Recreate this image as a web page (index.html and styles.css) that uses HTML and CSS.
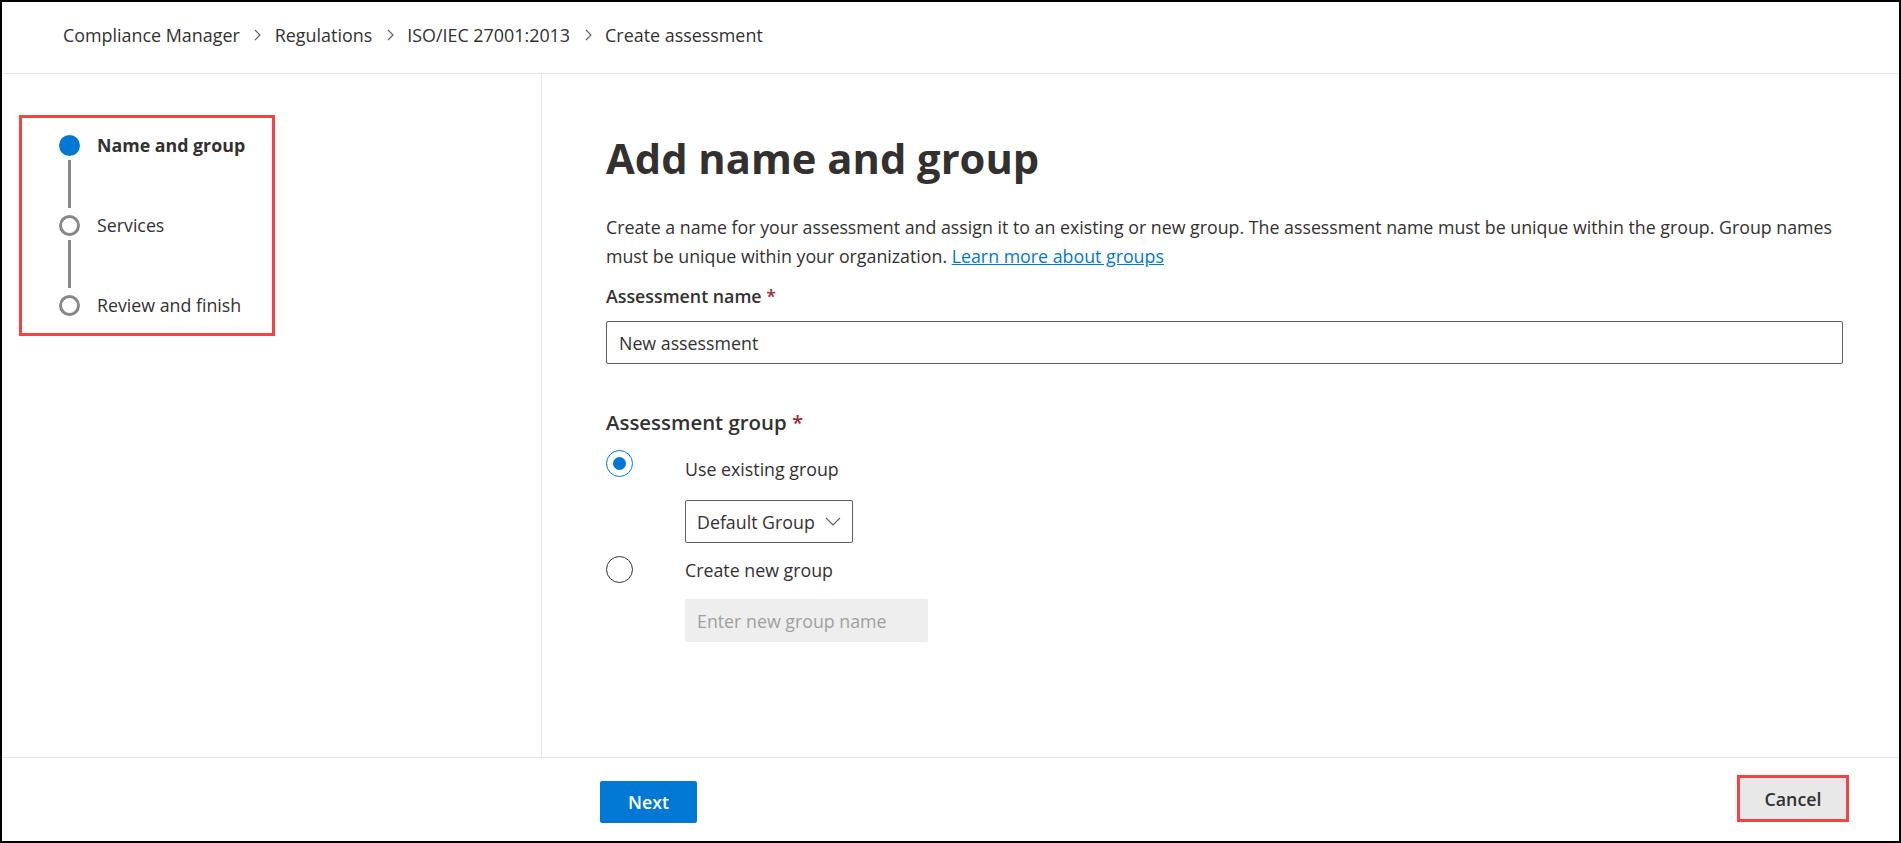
FILE: index.html
```html
<!DOCTYPE html>
<html lang="en">
<head>
<meta charset="utf-8">
<title>Create assessment</title>
<link rel="stylesheet" href="styles.css">
</head>
<body>
<div class="frame">
  <header class="topbar">
    <nav class="crumbs">
      <span class="crumb">Compliance Manager</span>
      <svg class="sep" width="10" height="14" viewBox="0 0 10 14"><path d="M3 2 L8 7 L3 12" fill="none" stroke="#605e5c" stroke-width="1.1"/></svg>
      <span class="crumb">Regulations</span>
      <svg class="sep" width="10" height="14" viewBox="0 0 10 14"><path d="M3 2 L8 7 L3 12" fill="none" stroke="#605e5c" stroke-width="1.1"/></svg>
      <span class="crumb">ISO/IEC 27001:2013</span>
      <svg class="sep" width="10" height="14" viewBox="0 0 10 14"><path d="M3 2 L8 7 L3 12" fill="none" stroke="#605e5c" stroke-width="1.1"/></svg>
      <span class="crumb">Create assessment</span>
    </nav>
  </header>

  <div class="content">
    <aside class="side">
      <div class="stepper">
        <div class="step current"><span class="dot"></span><span class="step-label">Name and group</span></div>
        <div class="connector"></div>
        <div class="step"><span class="dot"></span><span class="step-label">Services</span></div>
        <div class="connector"></div>
        <div class="step"><span class="dot"></span><span class="step-label">Review and finish</span></div>
      </div>
    </aside>

    <main class="main">
      <h1 class="title">Add name and group</h1>
      <p class="desc">Create a name for your assessment and assign it to an existing or new group. The assessment name must be unique within the group. Group names must be unique within your organization. <a href="#" class="link">Learn more about groups</a></p>

      <label class="field-label">Assessment name <span class="req">*</span></label>
      <div class="textbox">New assessment</div>

      <div class="group-label">Assessment group <span class="req">*</span></div>

      <div class="choice first">
        <span class="radio on"></span>
        <span class="choice-text">Use existing group</span>
      </div>
      <div class="dropdown">
        <span>Default Group</span>
        <svg width="16" height="9" viewBox="0 0 16 9"><path d="M1 1 L8 8 L15 1" fill="none" stroke="#605e5c" stroke-width="1.1"/></svg>
      </div>

      <div class="choice second">
        <span class="radio"></span>
        <span class="choice-text">Create new group</span>
      </div>
      <div class="textbox disabled">Enter new group name</div>
    </main>
  </div>

  <footer class="footer">
    <button class="btn primary">Next</button>
    <button class="btn cancel">Cancel</button>
  </footer>
</div>
</body>
</html>
```

FILE: styles.css
```css
html, body {
  margin: 0;
  padding: 0;
}

body {
  font-family: "Open Sans", "Noto Sans", sans-serif;
  color: #323130;
  background: #ffffff;
  font-size: 17.8px;
}

.frame {
  box-sizing: border-box;
  width: 1901px;
  height: 843px;
  border: 2px solid #000000;
  display: flex;
  flex-direction: column;
}

/* Header / breadcrumb */
.topbar {
  box-sizing: border-box;
  height: 72px;
  border-bottom: 1px solid #e5e5e5;
  display: flex;
  align-items: center;
  padding: 0 0 6px 61px;
  flex-shrink: 0;
}

.crumbs {
  display: flex;
  align-items: center;
  gap: 12.5px;
  font-size: 17.9px;
  color: #323130;
}

.sep {
  display: block;
}

/* Body */
.content {
  flex: 1;
  display: flex;
  min-height: 0;
}

.side {
  box-sizing: border-box;
  width: 540px;
  border-right: 1px solid #e5e5e5;
  padding: 41px 0 0 17px;
  flex-shrink: 0;
}

.stepper {
  box-sizing: border-box;
  width: 256px;
  height: 221px;
  border: 3px solid #f24444;
  padding: 17px 0 0 37px;
  display: flex;
  flex-direction: column;
}

.step {
  display: flex;
  align-items: center;
  height: 20px;
}

.dot {
  box-sizing: border-box;
  width: 21px;
  height: 21px;
  border-radius: 50%;
  border: 3px solid #8a8886;
  background: #ffffff;
  flex-shrink: 0;
}

.step.current .dot {
  border: none;
  background: #0078d4;
}

.step-label {
  margin-left: 17px;
  font-size: 17.8px;
  white-space: nowrap;
}

.step.current .step-label {
  font-weight: 700;
}

.connector {
  width: 3px;
  height: 48px;
  margin: 5px 0 7px 9px;
  background: #8a8886;
}

/* Main form */
.main {
  flex: 1;
  box-sizing: border-box;
  padding: 56px 56px 0 64px;
}

.title {
  margin: 0;
  font-size: 41.7px;
  line-height: 56px;
  font-weight: 700;
  color: #323130;
}

.desc {
  margin: 27px 0 0;
  line-height: 29px;
}

.link {
  color: #0078d4;
  text-decoration: underline;
}

.field-label {
  display: block;
  margin-top: 11px;
  line-height: 29px;
  font-weight: 600;
}

.req {
  color: #a4262c;
}

.textbox {
  box-sizing: border-box;
  margin-top: 10px;
  height: 43px;
  border: 1px solid #605e5c;
  border-radius: 2px;
  padding-left: 12px;
  display: flex;
  align-items: center;
}

.group-label {
  margin-top: 43px;
  font-size: 20.4px;
  line-height: 31px;
  font-weight: 600;
}

.choice {
  display: flex;
  align-items: flex-start;
}

.choice.first {
  margin-top: 12px;
}

.choice.second {
  margin-top: 13px;
}

.radio {
  box-sizing: border-box;
  width: 27px;
  height: 27px;
  border-radius: 50%;
  border: 1.5px solid #323130;
  display: flex;
  align-items: center;
  justify-content: center;
  flex-shrink: 0;
}

.radio.on {
  border-color: #0078d4;
}

.radio.on::after {
  content: "";
  width: 13px;
  height: 13px;
  border-radius: 50%;
  background: #0078d4;
}

.choice-text {
  margin-left: 52px;
  line-height: 29px;
}

.choice.first .choice-text {
  padding-top: 5px;
}

.dropdown {
  box-sizing: border-box;
  margin: 16px 0 0 79px;
  width: 168px;
  height: 43px;
  border: 1px solid #605e5c;
  border-radius: 2px;
  padding: 0 11px 0 11px;
  display: flex;
  align-items: center;
  justify-content: space-between;
}

.textbox.disabled {
  margin: 14px 0 0 79px;
  width: 243px;
  border: none;
  background: #eeeeee;
  color: #a19f9d;
}

/* Footer */
.footer {
  box-sizing: border-box;
  height: 84px;
  border-top: 1px solid #e5e5e5;
  display: flex;
  align-items: flex-start;
  padding-left: 598px;
  flex-shrink: 0;
}

.btn {
  font-family: inherit;
  font-size: 17.8px;
  font-weight: 600;
  border-radius: 2px;
  cursor: pointer;
}

.btn.primary {
  margin-top: 23px;
  width: 97px;
  height: 42px;
  background: #0078d4;
  border: none;
  color: #ffffff;
}

.btn.cancel {
  box-sizing: border-box;
  margin: 17px 50px 0 auto;
  width: 112px;
  height: 47px;
  border: 3px solid #f24444;
  border-radius: 0;
  background: #e8e8e8;
  color: #323130;
}
```
